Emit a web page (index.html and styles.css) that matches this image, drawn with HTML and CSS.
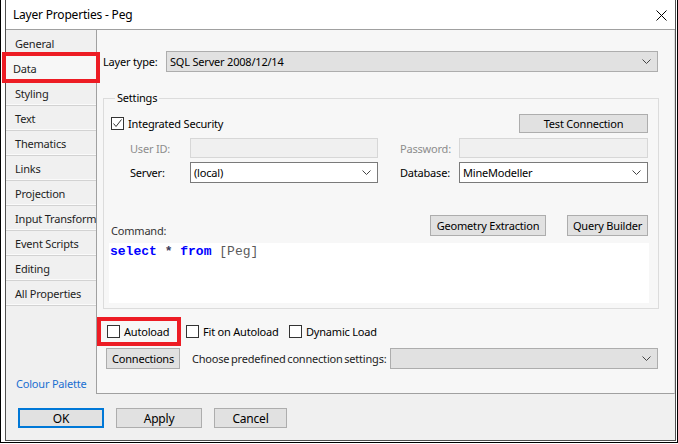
FILE: index.html
```html
<!DOCTYPE html>
<html lang="en">

<head>
    <meta charset="UTF-8">
    <title>Layer Properties - Peg</title>
    <link rel="stylesheet" href="styles.css">
</head>

<body>
    <div class="window">
        <div class="dialog">
            <div class="titlebar">
                <span class="title">Layer Properties - Peg</span>
                <svg class="close" width="11" height="11" viewBox="0 0 11 11">
                    <path d="M0.5 0.5 L10.5 10.5 M10.5 0.5 L0.5 10.5" stroke="#000" stroke-width="1" fill="none"/>
                </svg>
            </div>

            <div class="client">
                <div class="main">
                    <div class="side">
                        <ul class="tabs">
                            <li>General</li>
                            <li class="active">Data<span class="mark mark-tab"></span></li>
                            <li>Styling</li>
                            <li>Text</li>
                            <li>Thematics</li>
                            <li>Links</li>
                            <li>Projection</li>
                            <li>Input Transform</li>
                            <li>Event Scripts</li>
                            <li>Editing</li>
                            <li>All Properties</li>
                        </ul>
                        <a class="palette">Colour Palette</a>
                    </div>

                    <div class="panel">
                        <div class="type-row">
                            <span class="type-label">Layer type:</span>
                            <div class="combo gray">
                                <span>SQL Server 2008/12/14</span>
                                <svg class="chev" width="9" height="5" viewBox="0 0 9 5"><path d="M0.5 0.5 L4.5 4.5 L8.5 0.5" stroke="#444" fill="none"/></svg>
                            </div>
                        </div>

                        <fieldset class="settings">
                            <legend>Settings</legend>

                            <div class="security-row">
                                <label class="check">
                                    <span class="box"><svg width="11" height="11" viewBox="0 0 11 11"><path d="M1.5 5.5 L4 8.5 L9.5 1.5" stroke="#333" fill="none"/></svg></span>
                                    Integrated Security
                                </label>
                                <button class="btn btn-test">Test Connection</button>
                            </div>

                            <div class="fields">
                                <span class="lbl off">User ID:</span>
                                <div class="field off"></div>
                                <span class="lbl off">Password:</span>
                                <div class="field off"></div>
                                <span class="lbl">Server:</span>
                                <div class="combo white">
                                    <span>(local)</span>
                                    <svg class="chev" width="9" height="5" viewBox="0 0 9 5"><path d="M0.5 0.5 L4.5 4.5 L8.5 0.5" stroke="#444" fill="none"/></svg>
                                </div>
                                <span class="lbl">Database:</span>
                                <div class="combo white">
                                    <span>MineModeller</span>
                                    <svg class="chev" width="9" height="5" viewBox="0 0 9 5"><path d="M0.5 0.5 L4.5 4.5 L8.5 0.5" stroke="#444" fill="none"/></svg>
                                </div>
                            </div>

                            <div class="cmd-row">
                                <span class="cmd-label">Command:</span>
                                <button class="btn btn-geo">Geometry Extraction</button>
                                <button class="btn btn-query">Query Builder</button>
                            </div>

                            <div class="sql"><span class="kw">select</span> <span class="op">*</span> <span class="kw">from</span> <span class="id">[Peg]</span></div>
                        </fieldset>

                        <div class="load-row">
                            <label class="check load-auto">
                                <span class="box"></span>
                                Autoload
                                <span class="mark mark-load"></span>
                            </label>
                            <label class="check load-fit">
                                <span class="box"></span>
                                Fit on Autoload
                            </label>
                            <label class="check">
                                <span class="box"></span>
                                Dynamic Load
                            </label>
                        </div>

                        <div class="conn-row">
                            <button class="btn btn-conn">Connections</button>
                            <span class="conn-text">Choose predefined connection settings:</span>
                            <div class="combo gray conn-combo">
                                <span></span>
                                <svg class="chev" width="9" height="5" viewBox="0 0 9 5"><path d="M0.5 0.5 L4.5 4.5 L8.5 0.5" stroke="#444" fill="none"/></svg>
                            </div>
                        </div>
                    </div>
                </div>

                <div class="footer">
                    <button class="btn btn-ok">OK</button>
                    <button class="btn btn-apply">Apply</button>
                    <button class="btn btn-cancel">Cancel</button>
                </div>
            </div>
        </div>
    </div>
</body>

</html>
```

FILE: styles.css
```css
* {
    box-sizing: border-box;
}

body {
    margin: 0;
    background: #fff;
    font-family: "Segoe UI", "Noto Sans", sans-serif;
    font-size: 11px;
    letter-spacing: -0.2px;
    color: #000;
}

.window {
    width: 678px;
    height: 443px;
    border: 1px solid #000;
    border-top: none;
    padding: 0 1px 1px 4px;
    background: #fff;
}

.dialog {
    height: 100%;
    border: 1px solid #505050;
    border-top: none;
    display: flex;
    flex-direction: column;
}

.titlebar {
    height: 29px;
    flex-shrink: 0;
    display: flex;
    align-items: center;
    justify-content: space-between;
    padding: 0 8px 0 7px;
    background: #fff;
}

.title {
    font-size: 12px;
}

.close {
    margin-top: 1px;
}

.client {
    flex: 1;
    display: flex;
    flex-direction: column;
    border-top: 1px solid #a0a0a0;
    background: #f0f0f0;
}

.main {
    height: 364px;
    display: flex;
}

/* left tab list */
.side {
    width: 91px;
    flex-shrink: 0;
    display: flex;
    flex-direction: column;
    border-right: 1px solid #a0a0a0;
}

.tabs {
    list-style: none;
    margin: 0;
    padding: 1px 0 0 0;
}

.tabs li {
    position: relative;
    height: 25px;
    line-height: 24px;
    padding: 1px 0 0 9px;
    white-space: nowrap;
    border-bottom: 1px solid #d2d2d2;
    box-shadow: inset 0 -1px 0 #fafafa;
    color: #1e1e1e;
}

.tabs li.active {
    background: #f7f7f7;
    margin-right: -1px;
    padding-left: 7px;
}

.mark {
    position: absolute;
    border: 4px solid #ed1c24;
}

.mark-tab {
    left: -4px;
    top: -4px;
    width: 98px;
    height: 31px;
}

.palette {
    margin-top: auto;
    padding: 0 0 2px 10px;
    line-height: 16px;
    color: #1a6fd0;
}

/* right panel */
.panel {
    flex: 1;
    min-width: 0;
    background: #f7f7f7;
    border-bottom: 1px solid #a0a0a0;
    border-right: 1px solid #dcdcdc;
    padding: 0 15px 0 6px;
}

.type-row {
    display: flex;
    align-items: center;
    margin-top: 21px;
    padding-right: 1px;
}

.type-label {
    width: 63px;
}

.combo {
    display: flex;
    align-items: center;
    justify-content: space-between;
    padding: 0 6px 0 3px;
}

.combo.gray {
    flex: 1;
    height: 21px;
    background: #e1e1e1;
    border: 1px solid #adadad;
}

.combo.white {
    height: 21px;
    background: #fff;
    border: 1px solid #7a7a7a;
}

.settings {
    margin: 18px 0 0 0;
    padding: 8px 10px 5px 5px;
    border: 1px solid #dcdcdc;
    min-width: 0;
}

.settings legend {
    margin-left: 6px;
    padding: 0 2px;
    line-height: 16px;
}

.security-row {
    display: flex;
    align-items: center;
    justify-content: space-between;
    height: 19px;
}

.check {
    display: flex;
    align-items: center;
    gap: 4px;
    white-space: nowrap;
}

.box {
    width: 13px;
    height: 13px;
    flex-shrink: 0;
    border: 1px solid #333;
    background: #fff;
    display: flex;
    align-items: center;
    justify-content: center;
}

.security-row .check {
    margin-left: 2px;
}

.btn {
    font-family: inherit;
    font-size: 11px;
    letter-spacing: -0.2px;
    color: #000;
    background: #e1e1e1;
    border: 1px solid #adadad;
    padding: 0;
    white-space: nowrap;
}

.btn-test {
    width: 129px;
    height: 19px;
}

.fields {
    display: grid;
    grid-template-columns: 60px 188px 81px 189px;
    row-gap: 4px;
    margin: 5px 0 0 21px;
    align-items: center;
}

.fields .lbl:nth-of-type(2),
.fields .lbl:nth-of-type(4) {
    margin-left: 22px;
}

.lbl.off {
    color: #8d8d8d;
}

.field {
    height: 20px;
}

.field.off {
    background: #f0f0f0;
    border: 1px solid #d7d7d7;
}

.cmd-row {
    display: flex;
    align-items: flex-end;
    margin: 32px 0 0 2px;
    height: 21px;
}

.cmd-label {
    color: #333;
    margin-right: auto;
    margin-bottom: -2px;
    line-height: 14px;
}

.btn-geo {
    width: 116px;
    height: 21px;
    margin-right: 21px;
}

.btn-query {
    width: 81px;
    height: 21px;
}

.sql {
    height: 60px;
    margin: 7px -1px 0 0;
    background: #fff;
    padding: 1px 0 0 1px;
    font-family: "Liberation Mono", "Courier New", monospace;
    font-size: 13px;
    letter-spacing: 0;
    line-height: 16px;
    white-space: pre;
}

.sql .kw {
    color: #0000ff;
    font-weight: bold;
}

.sql .op {
    color: #3c3c5a;
    font-weight: bold;
}

.sql .id {
    color: #5a5a5a;
}

.load-row {
    display: flex;
    align-items: center;
    height: 20px;
    margin: 12px 0 0 4px;
}

.load-auto {
    position: relative;
    width: 79px;
}

.load-fit {
    width: 103px;
}

.mark-load {
    left: -10px;
    top: -7px;
    width: 84px;
    height: 29px;
}

.conn-row {
    display: flex;
    align-items: center;
    margin: 7px 1px 0 3px;
    height: 21px;
}

.btn-conn {
    flex-shrink: 0;
    width: 74px;
    height: 21px;
}

.conn-text {
    flex: none;
    width: 198px;
    overflow: hidden;
    margin-left: 12px;
    white-space: nowrap;
    word-spacing: -1px;
    color: #1e1e1e;
}

.conn-combo {
    flex: 1;
}

/* bottom buttons */
.footer {
    flex: 1;
    display: flex;
    align-items: flex-start;
    gap: 12px;
    padding: 14px 0 0 12px;
}

.footer .btn {
    height: 20px;
    font-size: 12px;
}

.btn-ok {
    width: 86px;
    border: 2px solid #0078d7;
}

.btn-apply {
    width: 86px;
}

.btn-cancel {
    width: 73px;
}
```
